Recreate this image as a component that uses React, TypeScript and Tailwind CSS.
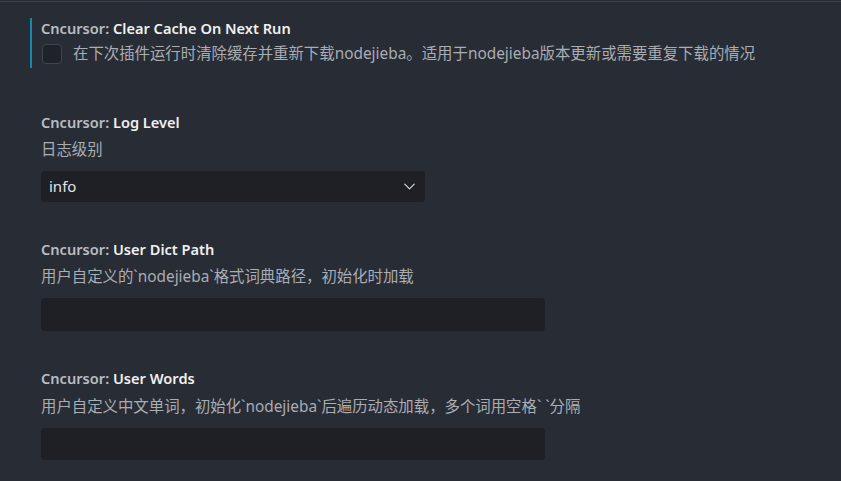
import { ChevronDown } from "lucide-react";

const FONT = {
  fontFamily: '"Noto Sans", "Noto Sans CJK SC", sans-serif',
};

function Title({ name }: { name: string }) {
  return (
    <div className="h-5 leading-5 text-[14.6px] whitespace-nowrap">
      <span className="font-semibold text-[#b9bdc5]">Cncursor: </span>
      <span className="font-semibold text-[#f0f0f0]">{name}</span>
    </div>
  );
}

function Desc({ children }: { children: React.ReactNode }) {
  return <div className="h-5 leading-5 text-[15.4px] text-[#a9adb4] whitespace-nowrap">{children}</div>;
}

export default function App() {
  return (
    <div className="w-[841px] h-[481px] overflow-hidden bg-[#282c34]" style={FONT}>
      <div className="mt-px h-px bg-[#3c414c]" />

      {/* Clear Cache On Next Run */}
      <div className="mt-4 ml-[30px] border-l-2 border-[#1389ad] pl-[9px] pb-1">
        <Title name="Clear Cache On Next Run" />
        <div className="mt-[6px] flex items-center gap-[11px]">
          <div className="ml-px w-5 h-5 rounded-[4px] bg-[#1f2228] border border-[#3f4450]" />
          <Desc>在下次插件运行时清除缓存并重新下载nodejieba。适用于nodejieba版本更新或需要重复下载的情况</Desc>
        </div>
      </div>

      {/* Log Level */}
      <div className="mt-[44px] pl-[41px]">
        <Title name="Log Level" />
        <div className="mt-2">
          <Desc>日志级别</Desc>
        </div>
        <div className="mt-[11px] w-[384px] h-[31px] rounded bg-[#1e2025] flex items-center justify-between pl-2 pr-[6px]">
          <span className="text-[15px] text-[#e4e4e4]">info</span>
          <ChevronDown size={19} strokeWidth={1.5} className="text-[#cfd3d9]" />
        </div>
      </div>

      {/* User Dict Path */}
      <div className="mt-[37px] pl-[41px]">
        <Title name="User Dict Path" />
        <div className="mt-2">
          <Desc>用户自定义的`nodejieba`格式词典路径，初始化时加载</Desc>
        </div>
        <div className="mt-[11px] w-[504px] h-[33px] rounded bg-[#1e2025]" />
      </div>

      {/* User Words */}
      <div className="mt-[37px] pl-[41px]">
        <Title name="User Words" />
        <div className="mt-[9px]">
          <Desc>用户自定义中文单词，初始化`nodejieba`后遍历动态加载，多个词用空格` `分隔</Desc>
        </div>
        <div className="mt-[11px] w-[504px] h-[32px] rounded bg-[#1e2025]" />
      </div>
    </div>
  );
}
